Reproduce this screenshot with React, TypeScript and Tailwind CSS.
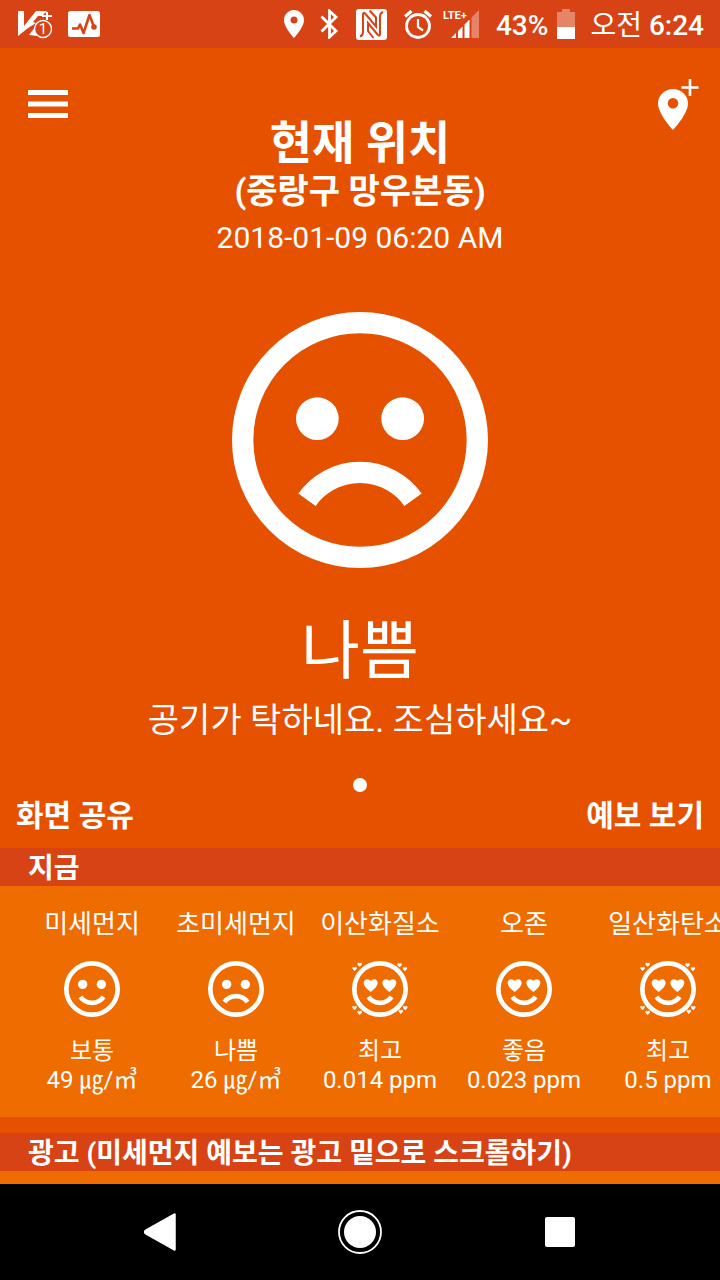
// Air quality screen: current location, overall grade and list of pollutants

type Mood = 'best' | 'good' | 'normal' | 'bad';

type Pollutant = {
  name: string;
  mood: Mood;
  grade: string;
  value: string;
};

const pollutants: Pollutant[] = [
  { name: '미세먼지', mood: 'normal', grade: '보통', value: '49 ㎍/㎥' },
  { name: '초미세먼지', mood: 'bad', grade: '나쁨', value: '26 ㎍/㎥' },
  { name: '이산화질소', mood: 'best', grade: '최고', value: '0.014 ppm' },
  { name: '오존', mood: 'good', grade: '좋음', value: '0.023 ppm' },
  { name: '일산화탄소', mood: 'best', grade: '최고', value: '0.5 ppm' },
];

// Small hearts around the face for the best grade
const sparkles = [
  [1.1, 3.4],
  [3.3, 1.6],
  [20.4, 1.8],
  [22.7, 3.5],
  [1.1, 20.2],
  [3.3, 22.2],
  [20.9, 21.8],
  [22.8, 20.2],
];

function Heart({ x, y, scale = 1 }: { x: number; y: number; scale?: number }) {
  return (
    <path
      transform={`translate(${x} ${y}) scale(${scale})`}
      d="M0 2.8C-1.9 1.3-3 .1-3-1.1C-3-2-2.3-2.7-1.5-2.7C-.9-2.7-.3-2.4 0-1.9C.3-2.4.9-2.7 1.5-2.7C2.3-2.7 3-2 3-1.1C3 .1 1.9 1.3 0 2.8Z"
      fill="currentColor"
    />
  );
}

function Face({ mood, className }: { mood: Mood; className: string }) {
  const hearts = mood === 'best' || mood === 'good';
  return (
    <svg viewBox="0 0 24 24" fill="none" className={`overflow-visible ${className}`} aria-hidden="true">
      <circle cx="12" cy="12" r="11" stroke="currentColor" strokeWidth="2" />
      {hearts ? (
        <>
          <Heart x={8} y={10.5} />
          <Heart x={16} y={10.5} />
        </>
      ) : (
        <>
          <circle cx="8" cy="10" r="2" fill="currentColor" />
          <circle cx="16" cy="10" r="2" fill="currentColor" />
        </>
      )}
      <path
        d={mood === 'bad' ? 'M7.03 17.6A6.1 6.1 0 0 1 16.97 17.6' : 'M7.03 15.4A6.1 6.1 0 0 0 16.97 15.4'}
        stroke="currentColor"
        strokeWidth="2"
      />
      {mood === 'best' && sparkles.map(([x, y]) => <Heart key={`${x}-${y}`} x={x} y={y} scale={0.32} />)}
    </svg>
  );
}

function StatusBar() {
  return (
    <div className="flex h-12 items-center justify-between bg-[#d84315] px-4 text-[28px] leading-8">
      <div className="flex items-center gap-4">
        <svg width="36" height="32" viewBox="0 0 36 32" fill="none" aria-hidden="true">
          <path d="M2 3H8V18L20 3H31L26 8H22L17 14L20 15L12 20L2 28Z" fill="white" />
          <path d="M13 27L20 18L22 28Z" fill="white" />
          <path d="M31 4V12M26 8H36" stroke="white" strokeWidth="2" />
          <circle cx="27" cy="21" r="8.5" fill="#d84315" stroke="white" strokeWidth="1.4" />
          <text x="27" y="26" fill="white" fontSize="15" textAnchor="middle">1</text>
        </svg>
        <svg width="32" height="32" viewBox="0 0 32 32" fill="none" aria-hidden="true">
          <rect y="3" width="32" height="26" rx="2.5" fill="white" />
          <path d="M4 20.5H10L12 16.500L15.500 25L21.500 7L26 19" stroke="#d84315" strokeWidth="2.600" strokeLinejoin="round" />
          <circle cx="26" cy="19" r="2.8" fill="#d84315" />
        </svg>
      </div>
      <div className="flex items-center gap-4">
        <svg width="20" height="30" viewBox="0 0 20 30" aria-hidden="true">
          <path
            d="M10 1C4.5 1 0 5.5 0 11C0 18.5 10 29 10 29S20 18.5 20 11C20 5.5 15.5 1 10 1ZM10 14.5A3.5 3.5 0 1 1 10 7.5A3.5 3.5 0 0 1 10 14.5Z"
            fill="white"
          />
        </svg>
        <svg width="20" height="30" viewBox="0 0 20 30" fill="none" aria-hidden="true">
          <path d="M1.5 7.5L16 22L9.5 28V2L16 8L1.5 22.5" stroke="white" strokeWidth="2.8" />
        </svg>
        <svg width="32" height="32" viewBox="0 0 32 32" fill="none" aria-hidden="true">
          <rect width="31" height="31" y="1" rx="3" fill="white" />
          <path d="M4 28.5Q7 27.500 7 24V6.500Q7 3.500 9.500 6L20 18.500V9.500L13.500 2.500" stroke="#d84315" strokeWidth="2" />
          <path d="M27 4Q24 5 24 8.500V26Q24 29 21.500 26.500L12 15V23L17.500 30" stroke="#d84315" strokeWidth="2" />
        </svg>
        <div className="flex items-center gap-3">
          <svg width="28" height="30" viewBox="0 0 28 30" fill="none" stroke="white" aria-hidden="true">
            <circle cx="14" cy="17" r="11.500" strokeWidth="2.800" />
            <path d="M1 7.500L7.500 2M27 7.500L20.500 2" strokeWidth="3.200" />
            <path d="M14 10V18L19 21.500" strokeWidth="2.200" />
          </svg>
          <svg width="36" height="32" viewBox="0 0 36 32" className="overflow-visible" aria-hidden="true">
            <path d="M7 30L12 25V30ZM14 23L18.500 18.500V30H14ZM20.500 16.500L25.500 11.500V30H20.500Z" fill="white" />
            <path d="M27.500 9.500L35 2V30H27.500Z" fill="white" fillOpacity=".35" />
            <text x="-1" y="11" fill="white" fontSize="11" fontWeight="700">LTE+</text>
          </svg>
        </div>
        <div className="flex items-center gap-3.5">
          <div className="flex items-center gap-2">
            <span className="pt-1 font-medium">43%</span>
            <svg width="20" height="30" viewBox="0 0 20 30" aria-hidden="true">
              <path d="M6 0H14V3H19V18H1V3H6Z" fill="white" fillOpacity=".35" />
              <rect x="1" y="18" width="18" height="12" fill="white" />
            </svg>
          </div>
          <span className="pt-1">
            오전 <span className="font-medium">6:24</span>
          </span>
        </div>
      </div>
    </div>
  );
}

function SectionTitle({ children }: { children: string }) {
  return <h2 className="bg-[#d84315] px-7 pt-1 text-[28px] font-bold leading-[34px]">{children}</h2>;
}

function NavBar() {
  return (
    <nav className="grid h-24 grid-cols-3 bg-black px-15">
      <button type="button" aria-label="뒤로" className="flex items-center justify-center">
        <svg width="32" height="38" viewBox="0 0 32 38" aria-hidden="true">
          <path d="M30.500 1.500L2 17.500Q0 19 2 20.500L30.500 36.500Z" fill="white" stroke="white" strokeWidth="2.500" strokeLinejoin="round" />
        </svg>
      </button>
      <button type="button" aria-label="홈" className="flex items-center justify-center">
        <svg width="44" height="44" viewBox="0 0 44 44" aria-hidden="true">
          <circle cx="22" cy="22" r="21" fill="none" stroke="white" strokeWidth="1.800" />
          <circle cx="22" cy="22" r="16" fill="white" />
        </svg>
      </button>
      <button type="button" aria-label="최근 앱" className="flex items-center justify-center">
        <span className="size-[30px] rounded-xs bg-white" />
      </button>
    </nav>
  );
}

export default function App() {
  return (
    <div className="flex min-h-screen flex-col bg-[#e65100] font-[Roboto,'Noto_Sans_CJK_KR',sans-serif] text-white">
      <StatusBar />
      <main className="flex flex-1 flex-col">
        <header className="grid grid-cols-[64px_1fr_64px] px-5 pt-6">
          <button type="button" aria-label="메뉴" className="flex h-16 w-14 items-center justify-center">
            <svg width="40" height="28" viewBox="0 0 40 28" aria-hidden="true">
              <path d="M0 0H40V5H0ZM0 11.500H40V16.500H0ZM0 23H40V28H0Z" fill="white" />
            </svg>
          </button>
          <div className="pt-11 text-center">
            <h1 className="font-bold">
              <span className="block text-[46px] leading-[54px]">현재 위치</span>
              <span className="block text-[34px] leading-[42px]">(중랑구 망우본동)</span>
            </h1>
            <p className="text-[30px] leading-[52px]">2018-01-09 06:20 AM</p>
          </div>
          <button type="button" aria-label="위치 추가" className="flex h-15 items-center justify-end">
            <svg width="44" height="56" viewBox="0 0 44 56" aria-hidden="true">
              <path
                d="M17 15C8.700 15 2 21.500 2 29.500C2 40 17 56 17 56S32 40 32 29.500C32 21.500 25.300 15 17 15ZM17 34.500A5.300 5.300 0 1 1 17 23.900A5.300 5.300 0 0 1 17 34.500Z"
                fill="white"
              />
              <path d="M34 5V22M25.500 13.500H42.500" stroke="white" strokeWidth="2.600" />
            </svg>
          </button>
        </header>

        <section className="flex flex-col items-center pt-12">
          <Face mood="bad" className="size-64" />
          <p className="mt-10 text-[64px] leading-[88px]">나쁨</p>
          <p className="text-[34px] leading-[48px]">공기가 탁하네요. 조심하세요~</p>
          <span className="mt-[34px] size-3.5 rounded-full bg-white" />
        </section>

        <div className="flex justify-between px-4 pb-2 text-[30px] font-bold leading-[48px]">
          <button type="button">화면 공유</button>
          <button type="button">예보 보기</button>
        </div>

        <SectionTitle>지금</SectionTitle>
        <ul className="flex overflow-hidden bg-[#ef6c00] px-5 pb-[22px] pt-[18px]">
          {pollutants.map((item) => (
            <li key={item.name} className="flex w-36 shrink-0 flex-col items-center whitespace-nowrap text-2xl leading-[29px]">
              <span className="text-[26px] leading-[40px]">{item.name}</span>
              <Face mood={item.mood} className="mb-5 mt-[17px] size-14" />
              <span>{item.grade}</span>
              <span>{item.value}</span>
            </li>
          ))}
        </ul>

        <div className="mt-4">
          <SectionTitle>광고 (미세먼지 예보는 광고 밑으로 스크롤하기)</SectionTitle>
        </div>
        <div className="flex-1 bg-[#ef6c00]" />
      </main>
      <NavBar />
    </div>
  );
}
